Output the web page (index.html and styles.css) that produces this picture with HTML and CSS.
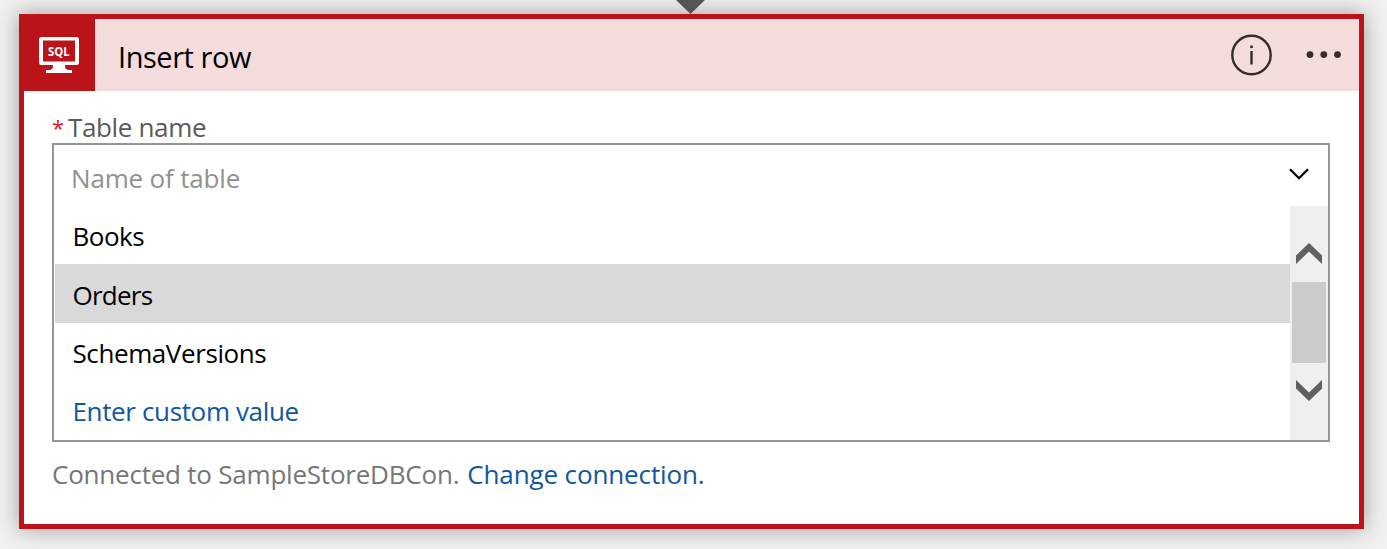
FILE: index.html
```
<!DOCTYPE html>
<html lang="en">
<head>
<meta charset="utf-8">
<title>Insert row</title>
<link rel="stylesheet" href="styles.css">
</head>
<body>
<main class="canvas">
  <section class="card">
    <header class="card-header">
      <div class="brand">
        <svg width="71" height="72" viewBox="0 0 71 72">
          <path fill="#fff" fill-rule="evenodd" d="M17.500 18h35a2.500 2.500 0 0 1 2.500 2.500v23a2.500 2.500 0 0 1-2.500 2.500H41v2q0 2 3 3h4v3H22v-3h4q3-1 3-3v-2H17.500a2.500 2.500 0 0 1-2.500-2.500v-23A2.500 2.500 0 0 1 17.500 18zM19 21.500v21h32v-21z"/>
          <text class="brand-text" x="24" y="36.600" textLength="21.600" lengthAdjust="spacingAndGlyphs">SQL</text>
        </svg>
      </div>
      <h1 class="title"><span class="t-title">Insert row</span></h1>
      <svg class="info" width="42" height="42" viewBox="0 0 42 42">
        <circle cx="20.500" cy="21" r="19.200" fill="none" stroke="#352b2c" stroke-width="2.400"/>
        <circle cx="20.500" cy="12.700" r="1.500" fill="#352b2c"/>
        <path d="M20.500 17v13.500" stroke="#352b2c" stroke-width="2.400"/>
      </svg>
      <svg class="more" width="36" height="8" viewBox="0 0 36 8">
        <g fill="#352b2c"><circle cx="4" cy="3.600" r="3.400"/><circle cx="17.800" cy="3.600" r="3.400"/><circle cx="31.500" cy="3.600" r="3.400"/></g>
      </svg>
    </header>
    <div class="card-body">
      <label class="field-label"><span class="star">*</span><span class="t-label">Table name</span></label>
      <div class="combo">
        <div class="combo-input">
          <span class="t-placeholder">Name of table</span>
          <svg width="20" height="12" viewBox="0 0 20 12"><path d="M1 1.200L10 10.200L19 1.200" fill="none" stroke="#000" stroke-width="2.300"/></svg>
        </div>
        <div class="combo-list">
          <ul class="options">
            <li><span class="t-books">Books</span></li>
            <li class="selected"><span class="t-orders">Orders</span></li>
            <li><span class="t-schema">SchemaVersions</span></li>
            <li class="custom"><span class="t-custom">Enter custom value</span></li>
          </ul>
          <div class="scrollbar">
            <svg width="26" height="21" viewBox="0 0 26 21"><path fill="#606060" d="M0 12.500L13 0l13 12.500V21L13 8.500 0 21z"/></svg>
            <div class="thumb"></div>
            <svg width="26" height="21" viewBox="0 0 26 21"><path fill="#606060" d="M0 0l13 12.500L26 0v8.500L13 21 0 8.500z"/></svg>
          </div>
        </div>
      </div>
      <p class="connection"><span class="t-conn">Connected to SampleStoreDBCon.</span><a class="t-change">Change connection.</a></p>
    </div>
  </section>
  <svg class="arrow" width="30" height="14" viewBox="0 0 30 14"><path fill="#555" d="M1 0h29L15.500 14z"/></svg>
</main>
</body>
</html>
```
FILE: styles.css
```
* { box-sizing: border-box; }
body {
  margin: 0;
  background: #f0f0f0;
  font-family: "Open Sans", "Noto Sans", sans-serif;
  font-size: 26px;
  color: #000;
}
svg { display: block; flex: none; }
span, a { white-space: nowrap; }
.canvas {
  position: relative;
  width: 1387px;
  height: 549px;
  padding: 14px 23px 20px 19px;
  overflow: hidden;
}
.arrow { position: absolute; left: 675px; top: 0; }
.card {
  height: 515px;
  border: 5px solid #ba141a;
  background: #fff;
  box-shadow: 0 0 20px rgba(0, 0, 0, 0.35);
}
.card-header {
  display: flex;
  align-items: center;
  height: 72px;
  padding-right: 17px;
  background: #f4dcdc;
}
.brand { width: 71px; height: 72px; background: #ba141a; }
.brand-text { font-size: 11.500px; font-weight: 700; fill: #fff; }
.title {
  flex: 1;
  margin: 0;
  padding: 3px 0 0 23px;
  font-size: 29px;
  line-height: 72px;
  font-weight: 400;
}
.t-title { letter-spacing: -0.450px; }
.info { margin-right: 33px; }
.card-body { padding: 20px 29px 0 28px; }
.field-label {
  display: flex;
  gap: 4px;
  height: 32px;
  line-height: 32px;
  color: #5a5a5a;
}
.star { width: 12px; font-size: 22px; color: #d3202c; }
.t-label { letter-spacing: -0.350px; }
.combo { height: 299px; border: 2px solid #969696; }
.combo-input {
  display: flex;
  justify-content: space-between;
  height: 61px;
  padding: 0 19px 0 17px;
  line-height: 66px;
  color: #919191;
}
.t-placeholder { letter-spacing: -0.170px; }
.combo-input svg { margin-top: 23px; }
.combo-list { display: flex; height: 234px; }
.options {
  flex: 1;
  display: grid;
  grid-template-rows: 58px 59px 58px 59px;
  margin: 0;
  padding: 0 0 0 1px;
  list-style: none;
  line-height: 61px;
}
.options li { padding-left: 17.500px; }
.t-books { letter-spacing: -0.500px; }
.t-orders { letter-spacing: -0.750px; }
.t-schema { letter-spacing: -0.400px; }
.t-custom { letter-spacing: -0.360px; }
.options .selected { background: #d9d9d9; line-height: 62px; }
.options .custom { color: #0f56a3; }
.scrollbar {
  display: flex;
  flex-direction: column;
  align-items: center;
  width: 38px;
  padding-top: 37px;
  background: #efefef;
}
.thumb { width: 34px; height: 81px; margin: 18px 0 17px; background: #cbcbcb; }
.connection {
  display: flex;
  gap: 8px;
  margin: 0;
  line-height: 64px;
  color: #767676;
}
.t-conn { letter-spacing: -0.220px; }
.t-change { letter-spacing: -0.120px; color: #0f56a3; }
```
